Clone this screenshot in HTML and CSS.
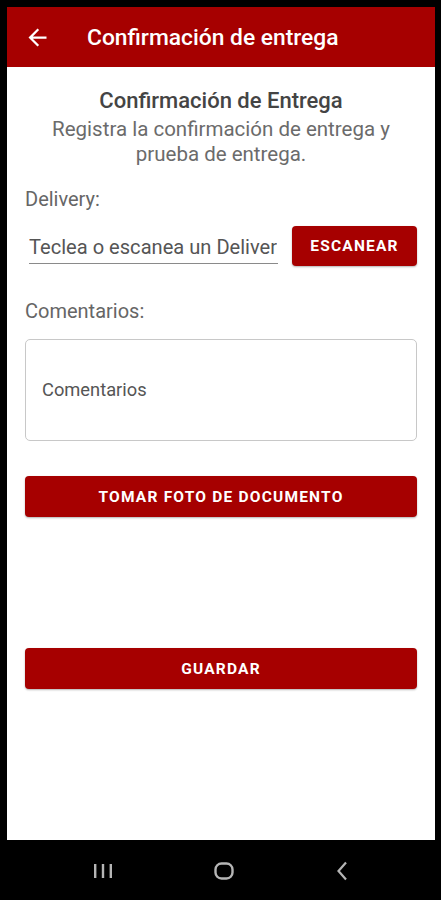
FILE: index.html
```html
<!DOCTYPE html>
<html lang="es">
<head>
    <meta charset="UTF-8">
    <meta name="viewport" content="width=device-width, initial-scale=1.0">
    <title>Confirmación de entrega</title>
    <link rel="stylesheet" href="styles.css">
</head>
<body>
    <div class="phone">
        <header class="appbar">
            <svg class="back" viewBox="0 0 24 24" width="27" height="27">
                <path d="M20 11H7.83l5.59-5.59L12 4l-8 8 8 8 1.41-1.41L7.83 13H20v-2z" fill="#ffffff"/>
            </svg>
            <h1>Confirmación de entrega</h1>
        </header>

        <main class="content">
            <h2>Confirmación de Entrega</h2>
            <p class="subtitle">Registra la confirmación de entrega y prueba de entrega.</p>

            <label class="field-label" for="delivery">Delivery:</label>
            <div class="scan-row">
                <input type="text" id="delivery" placeholder="Teclea o escanea un Delivery">
                <button type="button" class="btn btn-scan">Escanear</button>
            </div>

            <label class="field-label comments-label" for="comments">Comentarios:</label>
            <textarea id="comments" placeholder="Comentarios"></textarea>

            <button type="button" class="btn btn-wide btn-photo">Tomar foto de documento</button>
            <button type="button" class="btn btn-wide btn-save">Guardar</button>
        </main>

        <!-- Android navigation bar -->
        <nav class="navbar">
            <svg viewBox="0 0 20 16" width="20" height="16">
                <rect x="1" y="1" width="2.4" height="14" fill="#b5b5b5"/>
                <rect x="8.8" y="1" width="2.4" height="14" fill="#b5b5b5"/>
                <rect x="16.6" y="1" width="2.4" height="14" fill="#b5b5b5"/>
            </svg>
            <svg viewBox="0 0 20 18" width="20" height="18">
                <rect x="1.5" y="1.5" width="17" height="15" rx="6" fill="none" stroke="#b5b5b5" stroke-width="2.4"/>
            </svg>
            <svg viewBox="0 0 12 20" width="12" height="20">
                <path d="M10 1.5 2.5 10 10 18.5" fill="none" stroke="#b5b5b5" stroke-width="2.2"/>
            </svg>
        </nav>
    </div>
</body>
</html>
```

FILE: styles.css
```css
/* General Reset */
* {
    margin: 0;
    padding: 0;
    box-sizing: border-box;
    font-family: 'Roboto', 'Liberation Sans', sans-serif;
}

body {
    background: #000000;
    width: 441px;
    height: 900px;
    overflow: hidden;
}

.phone {
    padding: 7px 6px 0 7px;
    display: flex;
    flex-direction: column;
    height: 900px;
}

.appbar {
    background: #a60000;
    height: 60px;
    display: flex;
    align-items: center;
    padding-left: 17px;
}

.appbar .back {
    flex-shrink: 0;
}

.appbar h1 {
    color: #ffffff;
    font-size: 22.8px;
    font-weight: 500;
    margin-left: 36px;
    white-space: nowrap;
}

.content {
    background: #ffffff;
    height: 773px;
    padding: 22px 18px 0 18px;
    display: flex;
    flex-direction: column;
}

h2 {
    text-align: center;
    font-size: 22px;
    font-weight: 500;
    line-height: 24px;
    color: #444444;
    margin-bottom: 4px;
}

.subtitle {
    text-align: center;
    font-size: 20.5px;
    line-height: 25px;
    color: #6b6b6b;
    padding: 0 24px;
}

.field-label {
    font-size: 20px;
    line-height: 22px;
    color: #666666;
    margin-top: 21px;
}

.comments-label {
    margin-top: 34px;
}

.scan-row {
    display: flex;
    align-items: center;
    margin-top: 16px;
}

.scan-row input {
    width: 249px;
    margin-left: 4px;
    border: none;
    border-bottom: 1px solid #8a8a8a;
    font-size: 20.1px;
    line-height: 24px;
    padding: 1px 1px 4px 0;
    color: #555555;
    outline: none;
    margin-top: 6px;
}

.scan-row input::placeholder {
    color: #555555;
}

.btn {
    background: #a60000;
    color: #ffffff;
    border: none;
    border-radius: 4px;
    font-weight: 700;
    text-transform: uppercase;
    letter-spacing: 1.2px;
    cursor: pointer;
    box-shadow: 0 1px 2px rgba(0, 0, 0, 0.3);
}

.btn-scan {
    width: 125px;
    height: 40px;
    margin-left: 14px;
    font-size: 15.5px;
}

textarea {
    margin-top: 17px;
    height: 102px;
    border: 1px solid #c8c8c8;
    border-radius: 5px;
    padding: 39px 16px;
    font-size: 18.3px;
    line-height: 22px;
    color: #555555;
    resize: none;
    outline: none;
}

textarea::placeholder {
    color: #555555;
}

.btn-wide {
    width: 100%;
    height: 41px;
    font-size: 15.5px;
}

.btn-photo {
    margin-top: 35px;
}

.btn-save {
    margin-top: 131px;
}

.navbar {
    flex: 1;
    display: flex;
    align-items: center;
    padding-top: 2px;
}

.navbar svg:nth-child(1) {
    margin-left: 86px;
}

.navbar svg:nth-child(2) {
    margin-left: 101px;
}

.navbar svg:nth-child(3) {
    margin-left: 102px;
}
```
